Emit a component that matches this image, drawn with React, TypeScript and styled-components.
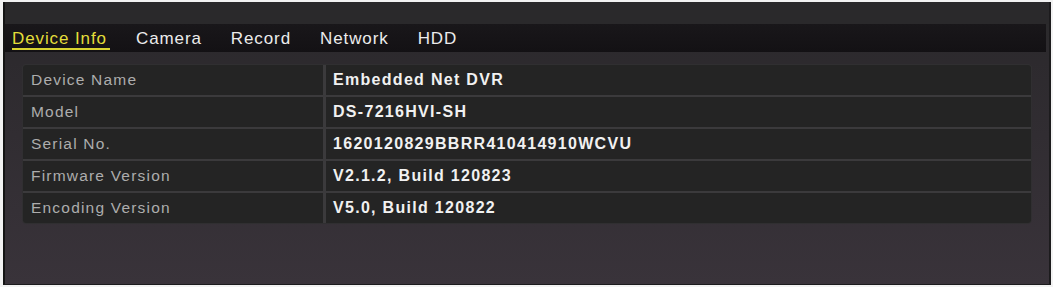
import React from "react";
import styled, { createGlobalStyle } from "styled-components";

const Global = createGlobalStyle`
  html, body { margin: 0; padding: 0; background: #f2f2f2; }
  body { font-family: "Liberation Sans", Arial, sans-serif; }
`;

const Frame = styled.div`
  margin: 2px 2px 0 3px;
  width: 1048px;
  height: 283px;
  box-sizing: border-box;
  border-left: 2px solid #141414;
  border-right: 2px solid #1c1b1d;
  border-bottom: 1px solid #1c1b1d;
  background: linear-gradient(180deg, #2b2a2c 0px, #2b2a2c 22px, #2d2a2e 60px, #39333a 100%);
  display: flex;
  flex-direction: column;
`;

const TopBand = styled.div`
  height: 22px;
  background: #2a292b;
`;

const TabBar = styled.div`
  height: 28px;
  margin-right: 3px;
  background: linear-gradient(180deg, #19171a 0%, #131114 100%);
  display: flex;
  align-items: stretch;
  gap: 29px;
  padding-left: 7px;
`;

const Tab = styled.div<{ $active?: boolean }>`
  position: relative;
  display: flex;
  align-items: center;
  font-size: 17px;
  letter-spacing: 0.9px;
  color: ${(p) => (p.$active ? "#e3de3a" : "#ececec")};
  padding-top: 1px;
  &::after {
    content: "";
    display: ${(p) => (p.$active ? "block" : "none")};
    position: absolute;
    left: 0;
    right: -3px;
    bottom: 2px;
    height: 2px;
    background: #d9d431;
  }
`;

const Content = styled.div`
  flex: 1;
  padding: 12px 17px 0 17px;
`;

const Table = styled.div`
  display: flex;
  flex-direction: column;
  gap: 2px;
  background: #3b3a3c;
  border: 1px solid #302f31;
  border-radius: 4px;
  overflow: hidden;
`;

const Row = styled.div`
  display: grid;
  grid-template-columns: 300px 1fr;
  gap: 3px;
  height: 30px;
`;

const Cell = styled.div<{ $value?: boolean }>`
  background: #242424;
  display: flex;
  align-items: center;
  padding-left: ${(p) => (p.$value ? "7px" : "8px")};
  font-size: ${(p) => (p.$value ? "16px" : "15.5px")};
  font-weight: ${(p) => (p.$value ? 700 : 400)};
  letter-spacing: ${(p) => (p.$value ? "1.3px" : "1.2px")};
  color: ${(p) => (p.$value ? "#f1f1f1" : "#adadad")};
`;

const rows: [string, string][] = [
  ["Device Name", "Embedded Net DVR"],
  ["Model", "DS-7216HVI-SH"],
  ["Serial No.", "1620120829BBRR410414910WCVU"],
  ["Firmware Version", "V2.1.2, Build 120823"],
  ["Encoding Version", "V5.0, Build 120822"],
];

const tabs = ["Device Info", "Camera", "Record", "Network", "HDD"];

export default function App() {
  return (
    <>
      <Global />
      <Frame>
        <TopBand />
        <TabBar>
          {tabs.map((t, i) => (
            <Tab key={t} $active={i === 0}>
              {t}
            </Tab>
          ))}
        </TabBar>
        <Content>
          <Table>
            {rows.map(([k, v]) => (
              <Row key={k}>
                <Cell>{k}</Cell>
                <Cell $value>{v}</Cell>
              </Row>
            ))}
          </Table>
        </Content>
      </Frame>
    </>
  );
}
